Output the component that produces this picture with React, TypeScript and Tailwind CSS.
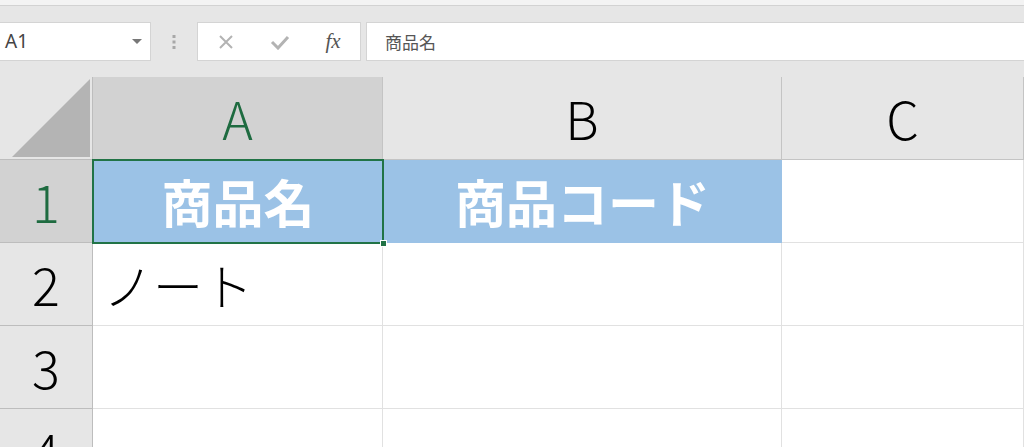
import React from "react";

const font = { fontFamily: '"Noto Sans CJK JP", "Noto Sans", sans-serif' };

function ColHeader({ label, selected }: { label: string; selected?: boolean }) {
  return (
    <div
      className={`flex items-center justify-center border-r border-b border-[#c4c4c4] text-[52px] font-light ${
        selected ? "bg-[#d2d2d2] text-[#1e6b40]" : "bg-[#e6e6e6] text-black"
      }`}
    >
      {label}
    </div>
  );
}

function RowHeader({ label, selected }: { label: string; selected?: boolean }) {
  return (
    <div
      className={`flex items-center justify-center border-r border-b border-[#bdbdbd] text-[52px] font-light ${
        selected ? "bg-[#d2d2d2] text-[#1e6b40]" : "bg-[#e6e6e6] text-black"
      }`}
    >
      {label}
    </div>
  );
}

function Cell({ children, className = "" }: { children?: React.ReactNode; className?: string }) {
  return <div className={`border-r border-b border-[#e1e1e1] ${className}`}>{children}</div>;
}

export default function App() {
  return (
    <div className="w-[1024px] h-[447px] overflow-hidden bg-white" style={font}>
      <div className="h-[5px] bg-[#f3f3f3] border-b border-[#d2d2d2] box-content" />
      <div className="h-[71px] bg-[#e6e6e6] flex items-start pt-[16px]">
        <div className="w-[151px] h-[39px] bg-white border border-[#d4d4d4] border-l-0 flex items-center justify-between pl-[5px] pr-[8px]">
          <span className="text-[19px] text-[#444]" style={{ fontFamily: '"Noto Sans", sans-serif' }}>A1</span>
          <svg width="10" height="6" viewBox="0 0 10 6">
            <path d="M0 0 L10 0 L5 5 Z" fill="#777" />
          </svg>
        </div>
        <div className="w-[46px] h-[39px] flex items-center justify-center">
          <svg width="4" height="16" viewBox="0 0 4 16">
            <rect x="0.5" y="1" width="3" height="3" fill="#a8a8a8" />
            <rect x="0.5" y="6.5" width="3" height="3" fill="#a8a8a8" />
            <rect x="0.5" y="12" width="3" height="3" fill="#a8a8a8" />
          </svg>
        </div>
        <div className="w-[164px] h-[39px] bg-white border border-[#d4d4d4] flex items-center">
          <div className="w-[56px] flex justify-center">
            <svg width="16" height="16" viewBox="0 0 16 16">
              <path d="M2 2 L14 14 M14 2 L2 14" stroke="#b3b3b3" strokeWidth="2" />
            </svg>
          </div>
          <div className="w-[52px] flex justify-center">
            <svg width="20" height="16" viewBox="0 0 20 16">
              <path d="M2 8 L8 14 L18 3" stroke="#b3b3b3" strokeWidth="3" fill="none" />
            </svg>
          </div>
          <div
            className="w-[54px] flex justify-center text-[21px] italic text-[#555]"
            style={{ fontFamily: '"Liberation Serif", serif' }}
          >
            fx
          </div>
        </div>
        <div className="ml-[5px] flex-1 h-[39px] bg-white border border-r-0 border-[#d4d4d4] flex items-center pl-[18px]">
          <span className="text-[17px] text-[#555]">商品名</span>
        </div>
      </div>
      <div className="grid grid-cols-[93px_290px_399px_1fr] grid-rows-[83px_83px_83px_83px_83px]">
        <div className="bg-[#e6e6e6] border-r border-b border-[#bdbdbd] flex items-end justify-end pr-[2px] pb-[2px]">
          <svg width="78" height="78" viewBox="0 0 78 78">
            <path d="M78 0 L78 78 L0 78 Z" fill="#b4b4b4" />
          </svg>
        </div>
        <ColHeader label="A" selected />
        <ColHeader label="B" />
        <ColHeader label="C" />

        <RowHeader label="1" selected />
        <div className="relative bg-[#9bc2e6] flex items-center justify-center text-white font-bold text-[51px]">
          商品名
          <div className="absolute -left-px -top-px -right-px -bottom-px border-2 border-[#217346]" />
          <div className="absolute -right-[4px] -bottom-[4px] w-[7px] h-[7px] bg-[#217346] border border-white" />
        </div>
        <div className="bg-[#9bc2e6] flex items-center justify-center text-white font-bold text-[51px] border-b border-[#9bc2e6]">
          商品コード
        </div>
        <Cell />

        <RowHeader label="2" />
        <Cell className="flex items-center pl-[10px] text-[50px] font-light text-black">ノート</Cell>
        <Cell />
        <Cell />

        <RowHeader label="3" />
        <Cell />
        <Cell />
        <Cell />

        <RowHeader label="4" />
        <Cell />
        <Cell />
        <Cell />
      </div>
    </div>
  );
}
